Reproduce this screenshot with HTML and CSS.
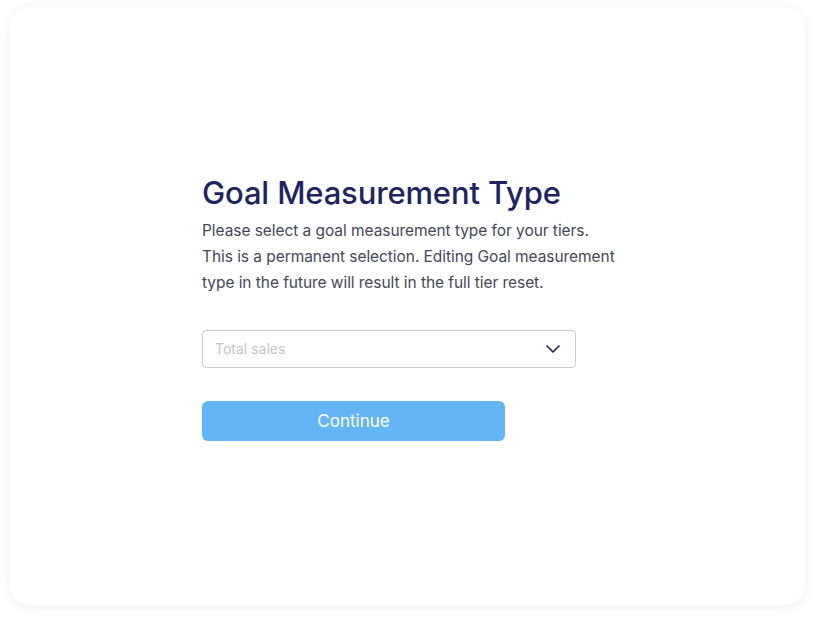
FILE: index.html
```html
<!DOCTYPE html>
<html>
<head>
<meta charset="utf-8">
<link rel="stylesheet" href="styles.css">
</head>
<body>
<div class="card">
  <div class="content">
    <h1 class="title">Goal Measurement Type</h1>
    <p class="desc">Please select a goal measurement type for your tiers. This is a permanent selection. Editing Goal measurement type in the future will result in the full tier reset.</p>
    <div class="select">
      <span class="placeholder">Total sales</span>
      <svg class="chevron" width="16" height="10" viewBox="0 0 16 10"><path d="M2 2 L8 8 L14 2" fill="none" stroke="#23285e" stroke-width="1.7" stroke-linecap="round" stroke-linejoin="round"/></svg>
    </div>
    <button class="btn">Continue</button>
  </div>
</div>
</body>
</html>
```

FILE: styles.css
```css
html, body {
  margin: 0;
  background: #ffffff;
}
body {
  padding: 7px 13px 13px 10px;
  font-family: "Inter", "Roboto", sans-serif;
}
.card {
  width: 795px;
  height: 598px;
  box-sizing: border-box;
  background: #ffffff;
  border-radius: 20px;
  box-shadow: 0 2px 12px rgba(0, 0, 0, 0.07);
  padding: 166px 0 0 192px;
}
.content {
  width: 430px;
  display: flex;
  flex-direction: column;
  align-items: flex-start;
}
.title {
  margin: 0;
  font-size: 31px;
  line-height: 40px;
  font-weight: 500;
  color: #1e2463;
  letter-spacing: -0.15px;
}
.desc {
  margin: 5px 0 0 0;
  width: 416px;
  font-size: 15.5px;
  line-height: 26px;
  color: #444857;
  letter-spacing: -0.06px;
}
.select {
  margin-top: 34px;
  width: 374px;
  height: 38px;
  box-sizing: border-box;
  border: 1px solid #c9c9c9;
  border-radius: 4px;
  display: flex;
  align-items: center;
  justify-content: space-between;
  padding: 0 14px 2px 12px;
}
.placeholder {
  font-size: 14px;
  color: #c4c4c4;
}
.chevron {
  display: block;
  margin-top: 2px;
}
.btn {
  margin-top: 33px;
  width: 303px;
  height: 40px;
  border: none;
  border-radius: 6px;
  background: #64b5f5;
  color: #ffffff;
  font-family: inherit;
  font-size: 17px;
  cursor: pointer;
}
```
